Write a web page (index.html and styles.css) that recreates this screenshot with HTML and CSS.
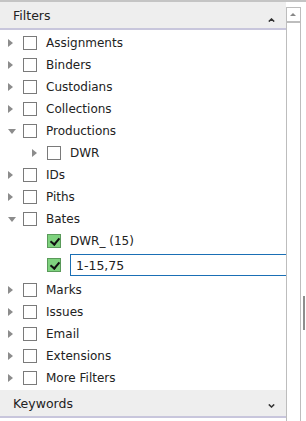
FILE: index.html
```html
<!DOCTYPE html>
<html lang="en">

<head>
    <meta charset="UTF-8">
    <title>Filters</title>
    <link rel="stylesheet" href="styles.css">
</head>

<body>
    <div id="page">
        <div id="panel">
            <div class="head">
                <span>Filters</span>
                <svg class="caret up-c" width="7" height="4" viewBox="0 0 7 4"><path d="M0.8 3.6 L3.5 1 L6.2 3.6" fill="none" stroke="#333" stroke-width="1.5"/></svg>
            </div>
            <ul class="tree">
                <li class="row"><i class="arrow"></i><b class="box"></b><span>Assignments</span></li>
                <li class="row"><i class="arrow"></i><b class="box"></b><span>Binders</span></li>
                <li class="row"><i class="arrow"></i><b class="box"></b><span>Custodians</span></li>
                <li class="row"><i class="arrow"></i><b class="box"></b><span>Collections</span></li>
                <li class="row"><i class="arrow open"></i><b class="box"></b><span>Productions</span></li>
                <li class="row sub"><i class="arrow"></i><b class="box"></b><span>DWR</span></li>
                <li class="row"><i class="arrow"></i><b class="box"></b><span>IDs</span></li>
                <li class="row"><i class="arrow"></i><b class="box"></b><span>Piths</span></li>
                <li class="row"><i class="arrow open"></i><b class="box"></b><span>Bates</span></li>
                <li class="row sub"><i class="blank"></i><b class="box on"></b><span>DWR_ (15)</span></li>
                <li class="row sub edit"><i class="blank"></i><b class="box on"></b><input type="text" value="1-15,75"></li>
                <li class="row"><i class="arrow"></i><b class="box"></b><span>Marks</span></li>
                <li class="row"><i class="arrow"></i><b class="box"></b><span>Issues</span></li>
                <li class="row"><i class="arrow"></i><b class="box"></b><span>Email</span></li>
                <li class="row"><i class="arrow"></i><b class="box"></b><span>Extensions</span></li>
                <li class="row"><i class="arrow"></i><b class="box"></b><span>More Filters</span></li>
            </ul>
            <div class="head">
                <span>Keywords</span>
                <svg class="caret down-c" width="7" height="4" viewBox="0 0 7 4"><path d="M0.8 0.4 L3.5 3 L6.2 0.4" fill="none" stroke="#333" stroke-width="1.5"/></svg>
            </div>
        </div>
        <div id="bar">
            <div class="up"></div>
        </div>
        <div id="edge">
            <div class="grip"></div>
        </div>
    </div>
</body>

</html>
```
FILE: styles.css
```css
* {
    margin: 0;
    padding: 0;
    box-sizing: border-box;
}

body {
    font-family: "DejaVu Sans", Verdana, sans-serif;
    font-size: 12px;
    color: #222;
    background: #fff;
}

ul {
    list-style: none;
}

#page {
    display: flex;
    height: 421px;
    border-top: 2px solid #c4c4c4;
}

#panel {
    width: 286px;
    flex: none;
}

.head {
    height: 28px;
    background: #eeeeee;
    border-bottom: 2px solid #c8c6dc;
    display: flex;
    align-items: center;
    justify-content: space-between;
    padding: 0 11px 0 13px;
    font-size: 12.5px;
}

.caret {
    display: block;
}

.caret.up-c {
    margin-top: 9px;
}

.caret.down-c {
    margin-top: 5px;
}

.tree {
    padding: 2px 0 1px;
}

.row {
    height: 22px;
    display: flex;
    align-items: center;
    padding-left: 8px;
}

.row.sub {
    padding-left: 32px;
}

.row.edit {
    height: 27px;
    padding-bottom: 1px;
}

.arrow,
.blank {
    width: 6px;
    height: 8px;
    margin-right: 9px;
    flex: none;
}

.arrow {
    border-left: 5px solid #8c8c8c;
    border-top: 4px solid transparent;
    border-bottom: 4px solid transparent;
}

.arrow.open {
    width: 8px;
    height: 5px;
    margin-right: 7px;
    border-left: 4px solid transparent;
    border-right: 4px solid transparent;
    border-top: 5px solid #8c8c8c;
    border-bottom: 0;
}

.box {
    width: 14px;
    height: 14px;
    border: 1px solid #7a7a7a;
    background: #fff;
    margin-right: 9px;
    flex: none;
    position: relative;
}

.box.on {
    background: #7ed27e;
    border-color: #5a9a5a;
}

/* 勾 */
.box.on::after {
    content: "";
    position: absolute;
    left: 4px;
    top: 1px;
    width: 4px;
    height: 7px;
    border-right: 2px solid #111;
    border-bottom: 2px solid #111;
    transform: rotate(40deg);
}

.row input {
    flex: 1;
    height: 22px;
    border: 1px solid #1a6fb5;
    border-right: 0;
    font-family: inherit;
    font-size: 12.5px;
    padding-left: 5px;
    color: #222;
    outline: none;
}

#bar {
    width: 15px;
    flex: none;
    margin-top: 5px;
    border-top: 1px solid #bdbdbd;
    border-left: 1px solid #bdbdbd;
    border-right: 1px solid #bdbdbd;
}

.up {
    height: 15px;
    border-bottom: 2px solid #bdbdbd;
    position: relative;
}

.up::after {
    content: "";
    position: absolute;
    left: 3px;
    top: 5px;
    border-left: 3px solid transparent;
    border-right: 3px solid transparent;
    border-bottom: 3px solid #888;
}

#edge {
    flex: 1;
    border-left: 1px solid #fff;
    display: flex;
    justify-content: flex-end;
    padding-top: 294px;
}

.grip {
    width: 2px;
    height: 34px;
    background: #8e8e8e;
    margin-right: 1px;
}
```
